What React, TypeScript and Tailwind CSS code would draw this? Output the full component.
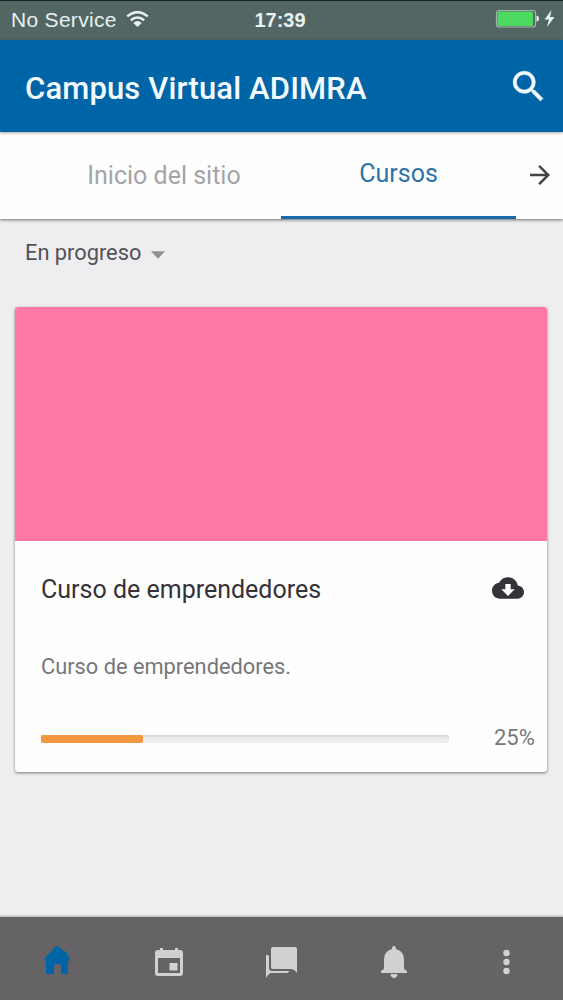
const progress = 25;

export default function App() {
  return (
    <div className="flex h-[1000px] w-[563px] flex-col overflow-hidden bg-[#eeedef] font-['Roboto',sans-serif]">
      <div className="grid h-10 shrink-0 grid-cols-3 items-center border-t border-[#14202b] bg-[#536664] px-[11px] pb-[2px] font-['Liberation_Sans',sans-serif] text-[20px] text-[#e6f1f0]">
        <div className="flex items-center gap-[9px]">
          <span className="whitespace-nowrap pt-px text-[21px] tracking-[0.3px]">No Service</span>
          <svg className="-mt-[2px] h-4 w-[23px] shrink-0" viewBox="0 0 23 16" fill="none" stroke="currentColor" strokeWidth="2.5">
            <path d="M1.2 5.4Q11.5-3.2 21.8 5.4M4.9 9.3Q11.5 3.6 18.1 9.3" />
            <path d="M7.3 12Q11.5 8.2 15.7 12L11.5 16Z" fill="currentColor" stroke="none" />
          </svg>
        </div>
        <span className="-ml-[3px] pt-px text-center font-bold">17:39</span>
        <div className="-mr-[3px] flex items-center justify-end">
          <svg className="-mt-[2px] h-[19px] w-[60px]" viewBox="0 0 60 19">
            <rect x="1.5" y="1.5" width="39" height="16.5" rx="2.5" fill="none" stroke="#a4b5af" strokeWidth="1.2" />
            <rect x="2.5" y="2.5" width="35.5" height="14.5" rx="1.5" fill="#4bd960" />
            <path d="M41.5 6.5Q44 7 44 9.5T41.5 12.5Z" fill="#e6f1f0" />
            <path d="M56.5 1L49.5 10.5H54L52 18L59.5 8H55Z" fill="#e6f1f0" />
          </svg>
        </div>
      </div>
      <header className="z-10 flex h-[92px] shrink-0 items-center justify-between bg-[#0065a6] px-[25px] text-[#f2faff] shadow-[0_1px_3px_rgba(0,0,0,0.35)]">
        <h1 className="pt-[6px] text-[31px] font-medium tracking-[0.15px]">Campus Virtual ADIMRA</h1>
        <svg className="-mr-[11px] h-[41px] w-[41px]" viewBox="0 0 24 24" fill="currentColor" stroke="currentColor" strokeWidth="0.3">
          <path d="M15.5 14h-.79l-.28-.27A6.47 6.47 0 0 0 16 9.5 6.5 6.5 0 1 0 9.5 16c1.61 0 3.09-.59 4.23-1.57l.27.28v.79l5 4.99L20.49 19l-4.99-5zm-6 0C7.01 14 5 11.99 5 9.5S7.01 5 9.5 5 14 7.01 14 9.5 11.99 14 9.5 14z" />
        </svg>
      </header>
      <nav className="flex h-[87px] shrink-0 bg-[#fefefe] pl-[47px] shadow-[0_1px_3px_rgba(0,0,0,0.55)]">
        <div className="flex w-[234px] items-center justify-center text-[25px] text-[#a4a4a7]">Inicio del sitio</div>
        <div className="flex w-[235px] items-center justify-center border-b-[3px] border-[#1768a4] text-[25px] text-[#2c73aa]">Cursos</div>
        <div className="flex flex-1 items-center justify-center text-[#454349]">
          <svg className="-mt-px h-[30px] w-[30px]" viewBox="0 0 24 24" fill="currentColor"><path d="M12 4l-1.41 1.41L16.17 11H4v2h12.17l-5.58 5.59L12 20l8-8z" /></svg>
        </div>
      </nav>
      <div className="flex h-[88px] shrink-0 items-start gap-[10px] pl-[25px] pt-[18px] text-[21.8px] leading-[32px] text-[#535256]">
        <span>En progreso</span>
        <svg className="mt-[14px] h-2 w-[14px]" viewBox="0 0 15 8"><path d="M0 0H15L7.5 8Z" fill="#929194" /></svg>
      </div>
      <article className="ml-[15px] flex h-[465px] w-[532px] shrink-0 flex-col overflow-hidden rounded-[3px] bg-[#fefefe] shadow-[0_1px_3px_rgba(0,0,0,0.5)]">
        <div className="h-[234px] bg-[#ff79a8]" />
        <div className="flex h-[95px] items-center justify-between pl-[26px] pr-[23px] text-[#353238]">
          <h2 className="pt-[2px] text-[25px]">Curso de emprendedores</h2>
          <svg className="-mt-px h-[32px] w-[32px]" viewBox="0 0 24 24" fill="currentColor"><path d="M19.35 10.04C18.67 6.59 15.64 4 12 4 9.11 4 6.6 5.64 5.35 8.04 2.34 8.36 0 10.91 0 14c0 3.31 2.69 6 6 6h13c2.76 0 5-2.24 5-5 0-2.64-2.05-4.78-4.65-4.96zM17 13l-5 5-5-5h3V9h4v4h3z" /></svg>
        </div>
        <p className="flex h-[60px] items-center pl-[26px] pt-[2px] text-[21.8px] text-[#777679]">Curso de emprendedores.</p>
        <div className="flex h-[76px] items-center pl-[26px] pt-[5px] text-[22px] text-[#777679]">
          <div className="mt-1 h-2 w-[408px] rounded-[2px] bg-[#eeecec] shadow-[inset_0_2px_2px_rgba(0,0,0,0.08)]">
            <div className="h-full rounded-[2px] bg-[#f4983f]" style={{ width: `${progress}%` }} />
          </div>
          <span className="ml-[45px] pt-px">{progress}%</span>
        </div>
      </article>
      <footer className="mt-auto grid h-[83px] shrink-0 grid-cols-5 place-items-center bg-[#656365] pt-[7px] text-[#d2d0d3] shadow-[0_-1px_2px_rgba(0,0,0,0.3)]">
        <svg className="mb-1 ml-[2px] h-[28px] w-[28px] text-[#0065a6]" viewBox="0 0 28 28" fill="currentColor"><path d="M14 0Q15 0 16 1L21 5.5H24V9L27 13Q28 15 25 15V27Q25 28 24 28H18V20Q18 18 14.5 18T11 20V28H4Q3 28 3 27V15Q0 15 2 12L12 1Q13 0 14 0Z" /></svg>
        <svg className="h-[30px] w-[30px]" viewBox="0 0 30 30" fill="currentColor"><path fillRule="evenodd" d="M6 1H9V3H21V1H24V3H26Q29 3 29 6V26Q29 29 26 29H4Q1 29 1 26V6Q1 3 4 3H6ZM4 11V26H26V11ZM15.5 16H23.5V23.5H15.5Z" /></svg>
        <svg className="h-[32px] w-[34px]" viewBox="0 0 34 32" fill="currentColor"><path d="M9 1H31Q33 1 33 3V27Q30 23 27 23H9Q7 23 7 21V3Q7 1 9 1ZM2 9Q3 8 5 10V22Q5 25 8 25H25Q25 27 23 27H7Q5 27 2 32Z" /></svg>
        <svg className="h-[32px] w-[28px]" viewBox="0 0 28 32" fill="currentColor"><path d="M12 3Q12 0 14 0T16 3Q24 5 24 14V22Q24 24 27 25V27H1V25Q4 24 4 22V14Q4 5 12 3ZM10.5 28H17.5Q17 32 14 32T10.5 28Z" /></svg>
        <svg className="h-[26px] w-2" viewBox="0 0 8 26" fill="currentColor"><circle cx="3.5" cy="4" r="3.2" /><circle cx="3.5" cy="13" r="3.2" /><circle cx="3.5" cy="22" r="3.2" /></svg>
      </footer>
    </div>
  );
}
